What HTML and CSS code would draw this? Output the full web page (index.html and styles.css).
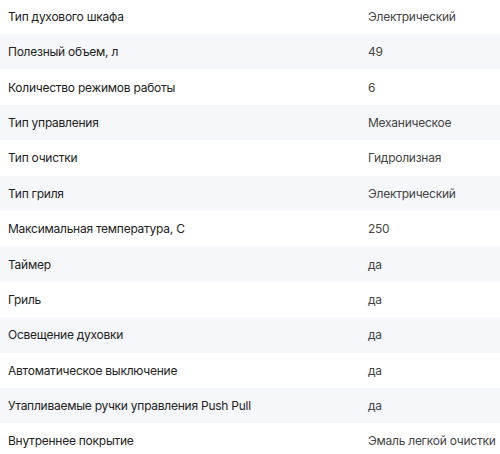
FILE: index.html
```
<!DOCTYPE html>
<html lang="ru">
<head>
<meta charset="utf-8">
<link rel="stylesheet" href="styles.css">
</head>
<body>
<div class="specs">
  <div class="row"><div class="name">Тип духового шкафа</div><div class="value">Электрический</div></div>
  <div class="row"><div class="name">Полезный объем, л</div><div class="value">49</div></div>
  <div class="row"><div class="name">Количество режимов работы</div><div class="value">6</div></div>
  <div class="row"><div class="name">Тип управления</div><div class="value">Механическое</div></div>
  <div class="row"><div class="name">Тип очистки</div><div class="value">Гидролизная</div></div>
  <div class="row"><div class="name">Тип гриля</div><div class="value">Электрический</div></div>
  <div class="row"><div class="name">Максимальная температура, С</div><div class="value">250</div></div>
  <div class="row"><div class="name">Таймер</div><div class="value">да</div></div>
  <div class="row"><div class="name">Гриль</div><div class="value">да</div></div>
  <div class="row"><div class="name">Освещение духовки</div><div class="value">да</div></div>
  <div class="row"><div class="name">Автоматическое выключение</div><div class="value">да</div></div>
  <div class="row"><div class="name">Утапливаемые ручки управления Push Pull</div><div class="value">да</div></div>
  <div class="row"><div class="name">Внутреннее покрытие</div><div class="value">Эмаль легкой очистки</div></div>
</div>
</body>
</html>
```
FILE: styles.css
```
html, body {
  margin: 0;
  padding: 0;
  background: #fff;
}
body {
  font-family: Inter, "Noto Sans", sans-serif;
  font-size: 12px;
  letter-spacing: -0.25px;
  overflow: hidden;
}
.specs {
  margin-top: -1.4px;
}
.row {
  display: grid;
  grid-template-columns: 360px 1fr;
  align-items: center;
  height: 35.4px;
  padding-left: 8px;
}
.row:nth-child(even) {
  background: #f6f7fa;
}
.name {
  color: #222;
}
.value {
  color: #444;
  white-space: nowrap;
}
```
